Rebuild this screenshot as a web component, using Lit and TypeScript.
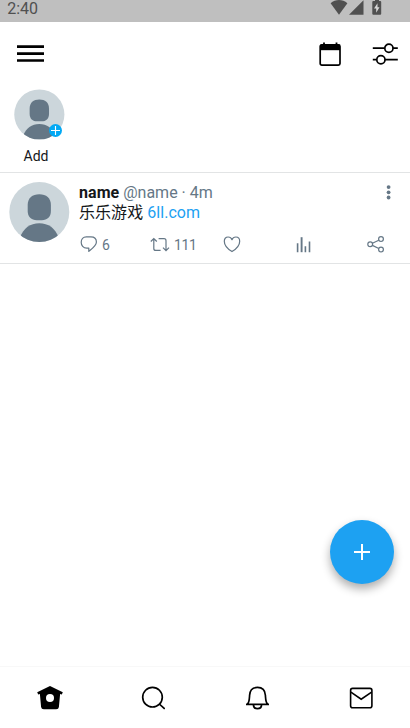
import { LitElement, html, svg, css } from "lit";
import { customElement, property } from "lit/decorators.js";

@customElement("user-avatar")
class UserAvatar extends LitElement {
  static styles = css`
    :host { display: block; }
    svg { display: block; width: 100%; height: 100%; }
  `;
  render() {
    return html`<svg viewBox="0 0 61 60" fill="#657786">
      <clipPath id="disc"><circle cx="30.3" cy="30" r="30"/></clipPath>
      <circle cx="30.3" cy="30" r="30" fill="#ccd6db"/>
      <path d="M30.3 12.2C37.3 12.2 41.9 16 41.9 23V29C41.9 35 38.3 38.2 32.8 38.2H27.8C22.3 38.2 18.7 35 18.7 29V23C18.7 16 23.3 12.2 30.3 12.2Z"/>
      <path clip-path="url(#disc)" d="M10.8 56C14.3 46 21.3 41.3 30.3 41.3S46.3 46 49.8 56V60H10.8Z"/>
    </svg>`;
  }
}

const line = (w: number, h: number, body: unknown, sw = 2) => html`
  <svg width=${w} height=${h} viewBox="0 0 ${w} ${h}" fill="none" stroke="currentColor" stroke-width=${sw}>${body}</svg>`;

const icons = {
  wifi: line(18, 16, svg`<path d="M-.4 3.2C4.4-1 11.6-1 16.4 3.2L8 14.7Z" fill="currentColor" stroke="none"/>`),
  signal: line(15, 16, svg`<path d="M0 14.8L14.5.3V14.8Z" fill="currentColor" stroke="none"/>`),
  battery: line(10, 16, svg`<path d="M3 0H7V1H8.2Q9.2 1 9.2 2V13.8Q9.2 14.8 8.2 14.8H1.3Q.3 14.8.3 13.8V2Q.3 1 1.3 1H3Z" fill="currentColor" stroke="none"/><path d="M5.5 3.2L2 8.6H4.2V12.8L7.5 7.2H5.5Z" fill="#d8d8d8" stroke="none"/>`),
  menu: line(27, 18, svg`<path d="M0 1.7H27M0 8.6H27M0 15.5H27"/>`, 2.7),
  calendar: line(22, 25, svg`<rect x="1.2" y="2.8" width="19.8" height="20.4" rx="1.6" stroke-width="1.7"/><path d="M1.2 2.6H21V8.2H1.2Z" fill="currentColor" stroke="none"/><path d="M5 .6V4M17.5 .6V4" stroke-width="1.8"/>`),
  sliders: line(26, 23, svg`<path d="M.8 5.2H12.2M20.8 5.2H25.8M.8 16.7H4.2M12.8 16.7H25.8"/><circle cx="16.9" cy="5.2" r="4.1"/><circle cx="8.9" cy="16.7" r="4.1"/>`, 1.7),
  reply: line(18, 17, svg`<path d="M6.3 .9H10.9C14.4 .9 16.4 3.1 16.4 6C16.4 9.6 13 12 8.8 15.4V12.1H6.8C3.2 12.1 1.2 9.5 1.2 6.3C1.2 3.2 3.2 .9 6.3 .9Z" stroke-linejoin="round"/>`, 1.2),
  retweet: line(20, 16, svg`<path d="M.8 4.5L3.8 1.5L6.8 4.5M3.8 1.7V11.4Q3.8 13.4 5.8 13.4H10.6M8.6 1.7H14Q16 1.7 16 3.7V13.4M13 10.6L16 13.6L19 10.6"/>`, 1.2),
  heart: line(18, 17, svg`<path d="M9 15.6C4.6 13 1.3 9.3 1.3 5.3C1.3 2.5 3 1 5.1 1C7 1 8.4 2.1 9 3.7C9.6 2.1 11 1 12.9 1C15 1 16.7 2.5 16.7 5.3C16.7 9.3 13.4 13 9 15.6Z" stroke-linejoin="round"/>`, 1.2),
  bars: line(15, 16, svg`<path d="M1.6 6.3V15.2M9.4 9.2V15.2M13.5 4.5V15.2" stroke-width="1.6"/><path d="M5.6 .2V15.2" stroke-width="1.9"/>`),
  share: line(18, 17, svg`<circle cx="3.2" cy="8.3" r="2.4"/><circle cx="14" cy="3.1" r="2.4"/><circle cx="14" cy="13.6" r="2.4"/><path d="M5.4 7.3L11.8 4.2M5.4 9.4L11.8 12.5"/>`, 1.2),
  dots: line(5, 15, svg`<g fill="currentColor" stroke="none"><circle cx="2.6" cy="2.1" r="1.9"/><circle cx="2.6" cy="7.3" r="1.9"/><circle cx="2.6" cy="12.5" r="1.9"/></g>`),
  plus: line(16, 16, svg`<path d="M8 0V16M0 8H16"/>`),
  home: line(26, 25, svg`<path d="M13 1L25.8 7.3L24.8 9.4L23.1 8.9L21.9 22Q21.6 24.3 19.2 24.3H6.8Q4.4 24.3 4.1 22L2.9 8.9L1.2 9.4L.2 7.3Z" fill="currentColor" stroke="none"/><circle cx="13" cy="13" r="4" fill="#fff" stroke="none"/>`),
  search: line(24, 24, svg`<circle cx="11.5" cy="11.2" r="9.8"/><path d="M18.3 18L23.7 23"/>`, 1.7),
  bell: line(23, 24, svg`<path d="M1.4 18.2C3.4 16.4 3.3 13.8 3.6 9.3C3.9 4.2 7 1.4 11.5 1.4S19.1 4.2 19.4 9.3C19.7 13.8 19.6 16.4 21.6 18.2M0 18.4H23M7.4 18.6C7.6 24 15.4 24 15.6 18.6"/>`, 1.7),
  mail: line(24, 22, svg`<rect x="1.6" y="1.4" width="21.3" height="19.3" rx="2"/><path d="M1.9 5.2L12.2 12.2L22.6 5.2"/>`, 1.6),
};

@customElement("post-row")
class PostRow extends LitElement {
  @property({ attribute: false }) post = {
    name: "name", handle: "@name", age: "4m", text: "乐乐游戏", link: "6ll.com", replies: 6, shares: 111,
  };
  static styles = css`
    :host { display: flex; box-sizing: border-box; height: 91px; padding: 9px 19px 0 9px; border-bottom: 1px solid #e2e4e5; }
    user-avatar { flex: none; width: 61px; height: 60px; }
    .body { flex: 1; min-width: 0; padding: 1px 0 0 9px; color: #14171a; font-size: 16px; }
    .head { display: flex; height: 20px; line-height: 19px; justify-content: space-between; }
    .muted, .actions, .more { color: #657786; }
    .head b { letter-spacing: .05px; }
    .more { padding-top: 2px; width: 5px; }
    .text { height: 20px; line-height: 20px; white-space: nowrap; letter-spacing: .05px; }
    .text a { color: #1da1f2; }
    .actions { display: grid; grid-template-columns: 70px 73px 72.5px 71px 18px; margin-top: 12.5px; font-size: 14px; line-height: 17px; }
    .action { display: flex; align-items: center; gap: 4px; height: 18px; padding-left: 1px; }
    .action span { padding-top: 1px; letter-spacing: -.4px; }
    .action svg { display: block; flex: none; }
  `;
  render() {
    const p = this.post;
    return html`
      <user-avatar></user-avatar>
      <div class="body">
        <div class="head"><div><b>${p.name}</b> <span class="muted">${p.handle} · ${p.age}</span></div><div class="more">${icons.dots}</div></div>
        <div class="text">${p.text} <a>${p.link}</a></div>
        <div class="actions">
          <div class="action">${icons.reply}<span>${p.replies}</span></div>
          <div class="action">${icons.retweet}<span>${p.shares}</span></div>
          <div class="action">${icons.heart}</div>
          <div class="action">${icons.bars}</div>
          <div class="action">${icons.share}</div>
        </div>
      </div>`;
  }
}

@customElement("app-root")
class AppRoot extends LitElement {
  static styles = css`
    :host { display: flex; flex-direction: column; position: relative; box-sizing: border-box; width: 100%; height: 100vh; overflow: hidden; background: #fff; color: #000; font-family: Roboto, "Noto Sans CJK SC", sans-serif; }
    svg { display: block; flex: none; }
    .status { display: flex; height: 22px; padding: 0 28px 0 7.2px; background: #bfbfbf; color: #505050; font-size: 16px; line-height: 17px; justify-content: space-between; }
    .signals { display: flex; }
    .signals svg:last-child { margin-left: 8px; }
    .signals svg:first-child { overflow: visible; }
    header { display: flex; height: 64px; padding: 0 12px 0 17px; align-items: center; box-sizing: border-box; }
    header .gap { flex: 1; }
    header svg:last-child { margin-left: 31px; }
    .stories { height: 87px; box-sizing: border-box; padding: 3px 0 0 14px; border-bottom: 1px solid #e2e4e5; }
    .story { width: 51px; position: relative; }
    .story user-avatar { width: 51px; height: 51px; }
    .badge { position: absolute; left: 35px; top: 34.5px; width: 13px; height: 13px; border-radius: 50%; background: #03a9f4; display: grid; place-items: center; color: #fff; }
    .badge svg { width: 9px; height: 9px; }
    .story p { margin: 7px 7px 0 0; font-size: 14px; line-height: 18px; text-align: center; color: #14171a; }
    main { flex: 1; }
    .fab { position: absolute; right: 15.7px; bottom: 144px; width: 64px; height: 64px; border-radius: 50%; background: #1da1f2; color: #fff; display: grid; place-items: center; box-shadow: 0 5px 10px rgba(0, 0, 0, .32); }
    nav { display: flex; height: 62px; box-sizing: border-box; border-top: 1px solid #f8f8f8; padding: 0 37px; align-items: center; justify-content: space-between; }
    nav svg:nth-child(2) { margin: 0 1.5px 0 -1.5px; }
  `;
  render() {
    return html`
      <div class="status"><span>2:40</span><div class="signals">${icons.wifi}${icons.signal}${icons.battery}</div></div>
      <header>${icons.menu}<div class="gap"></div>${icons.calendar}${icons.sliders}</header>
      <section class="stories">
        <div class="story"><user-avatar></user-avatar><div class="badge">${icons.plus}</div><p>Add</p></div>
      </section>
      <main><post-row></post-row></main>
      <nav>${icons.home}${icons.search}${icons.bell}${icons.mail}</nav>
      <div class="fab">${icons.plus}</div>`;
  }
}
